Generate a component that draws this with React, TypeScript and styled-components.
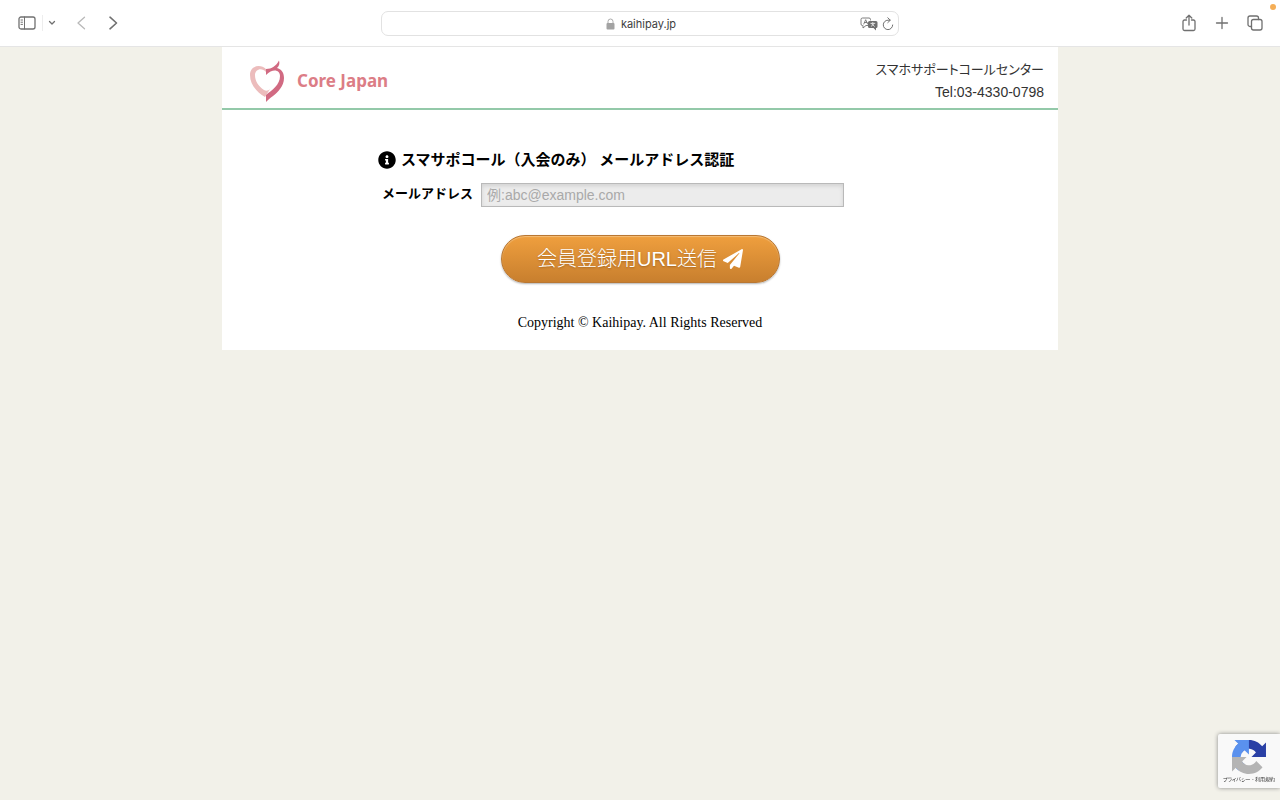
import React from "react";
import styled, { createGlobalStyle } from "styled-components";
import { FaInfoCircle, FaPaperPlane } from "react-icons/fa";

const sans = `"Liberation Sans", "Noto Sans CJK JP", sans-serif`;
const serif = `"Liberation Serif", "Noto Sans CJK JP", serif`;

const GlobalStyle = createGlobalStyle`
  *, *::before, *::after { box-sizing: border-box; }
  body {
    margin: 0;
    background: #f2f1e9;
    color: #000;
    font-family: ${serif};
  }
`;

const Toolbar = styled.header`
  display: grid;
  grid-template-columns: 1fr minmax(240px, 518px) 1fr;
  align-items: center;
  height: 47px;
  border-bottom: 1px solid #e5e5e5;
  background: #fff;
  color: #707070;
  font-family: Inter, sans-serif;
`;

const ToolGroup = styled.div<{ $end?: boolean }>`
  display: flex;
  align-items: center;
  justify-content: ${(p) => (p.$end ? "flex-end" : "flex-start")};
  gap: ${(p) => (p.$end ? "11px" : "0")};
  padding: ${(p) => (p.$end ? "0 14px 0 0" : "0 0 0 16px")};
`;

const ToolButton = styled.button<{ $width?: number; $color?: string }>`
  display: flex;
  align-items: center;
  justify-content: center;
  width: ${(p) => p.$width ?? 22}px;
  height: 24px;
  padding: 0;
  border: 0;
  background: none;
  color: ${(p) => p.$color ?? "inherit"};
`;

const Separator = styled.span`
  width: 1px;
  height: 16px;
  margin-left: 4px;
  background: #ededed;
`;

const HistoryButtons = styled.nav`
  display: flex;
  gap: 8px;
  margin-left: 8px;
`;

const AddressBar = styled.div`
  display: grid;
  grid-template-columns: 1fr auto 1fr;
  align-items: center;
  height: 25px;
  padding: 0 2px 0 4px;
  border: 1px solid #e2e2e2;
  border-radius: 7px;
`;

const Address = styled.div`
  grid-column: 2;
  display: flex;
  align-items: center;
  gap: 6px;
  color: #404040;
  font-size: 11px;
  line-height: 16px;
`;

const AddressActions = styled.div`
  display: flex;
  justify-content: flex-end;
`;

const RecordingDot = styled.span`
  position: absolute;
  top: 4px;
  right: 4px;
  width: 6px;
  height: 6px;
  border-radius: 50%;
  background: #f5ae56;
`;

const Sheet = styled.div`
  max-width: 836px;
  margin: 0 auto;
  background: #fff;
`;

const SiteHeader = styled.div`
  display: flex;
  justify-content: space-between;
  align-items: center;
  height: 63px;
  padding: 6px 14px 0 27px;
  border-bottom: 2px solid #93c9a9;
`;

const Brand = styled.a`
  display: flex;
  align-items: center;
  gap: 11px;
  color: #dc7d86;
  font: bold 17px/24px "Comic Sans MS", "Noto Sans", sans-serif;
  text-decoration: none;
`;

const Contact = styled.address`
  color: #333;
  font: normal 14px/22px ${sans};
  text-align: right;
`;

const CenterName = styled.div`
  font-size: 13px;
  font-feature-settings: "palt";
`;

const Main = styled.main`
  padding: 40px 156px 0;
`;

const Title = styled.h1`
  display: flex;
  align-items: center;
  gap: 5px;
  margin: 0;
  font-size: 15px;
  line-height: 20px;
  white-space: pre;
`;

const Field = styled.div`
  display: flex;
  gap: 8px;
  margin: 13px 58px 0 4px;
`;

const Label = styled.label`
  flex: none;
  font-size: 13px;
  font-weight: bold;
  line-height: 22px;
`;

const EmailInput = styled.input`
  flex: 1;
  min-width: 0;
  height: 24px;
  padding: 0 5px;
  border: 1px solid #b9b9b9;
  border-radius: 0;
  background: #ececec;
  box-shadow: inset 0 2px 4px #d2d2d2;
  font: 14px/20px ${sans};
  &::placeholder {
    color: #a9a9a9;
    opacity: 1;
  }
`;

const SubmitButton = styled.button`
  display: flex;
  align-items: center;
  justify-content: center;
  gap: 6px;
  width: 279px;
  height: 48px;
  margin: 28px auto 0;
  padding: 0;
  border: 1px solid #b97732;
  border-radius: 24px;
  background: linear-gradient(#ef9f3e, #c87f2e);
  box-shadow: inset 0 1px 1px #f3bd78, 0 1px 2px rgba(0, 0, 0, 0.3);
  color: #fff;
  font: 300 20px/28px ${sans};
  text-shadow: 0 1px 2px rgba(90, 50, 0, 0.4);
`;

const Footer = styled.footer`
  padding: 30px 0 17px;
  font-size: 14px;
  line-height: 20px;
  text-align: center;
`;

const Captcha = styled.aside`
  position: fixed;
  right: 0;
  bottom: 12px;
  display: flex;
  flex-direction: column;
  align-items: center;
  gap: 1px;
  width: 62px;
  height: 54px;
  padding-top: 6px;
  border-radius: 2px 0 0 2px;
  background: #f9f9f9;
  box-shadow: 0 0 4px #888;
`;

const CaptchaLinks = styled.div`
  color: #555;
  font: 5px/8px ${sans};
  font-feature-settings: "palt";
  white-space: nowrap;
  a {
    color: #333;
    text-decoration: none;
  }
`;

const Icon = ({ w, h, children }: { w: number; h: number; children: React.ReactNode }) => (
  <svg
    width={w}
    height={h}
    viewBox={`0 0 ${w} ${h}`}
    fill="none"
    stroke="currentColor"
    strokeWidth="1.3"
    strokeLinecap="round"
    strokeLinejoin="round"
    aria-hidden="true"
  >
    {children}
  </svg>
);

const HeartLogo = () => (
  <svg width="37" height="42" viewBox="0 0 37 42" aria-hidden="true">
    <path
      fill="#ecbcbc"
      d="M17 9C12 4 1 5 1 15C1 25 8 32 16 37L21 29C19 31 17 31 15 30C9 26 6 21 6 15C6 9 13 7 17 12Z"
    />
    <path
      fill="#d16a82"
      d="M17 9C23 9 27 6 30 .5C31 4 30 6 28 8C32 9 35 12 35 18C35 26 29 32 24 36C21 38 19 40 17 42V35C23 30 31 25 31 16C31 10 24 8 17 15Z"
    />
  </svg>
);

const RecaptchaLogo = () => (
  <svg width="34" height="34" viewBox="0 0 64 64" aria-hidden="true">
    <path
      fill="#2a40a5"
      d="M64 31.955l-.033-1.37V4.687l-7.16 7.16C50.948 4.674 42.033.093 32.05.093c-10.4 0-19.622 4.96-25.458 12.64l11.736 11.86a15.55 15.55 0 0 1 4.754-5.334c2.05-1.6 4.952-2.906 8.968-2.906.485 0 .86.057 1.135.163 4.976.393 9.288 3.14 11.828 7.124l-8.307 8.307L64 31.953"
    />
    <path
      fill="#5a91ee"
      d="M31.862.094l-1.37.033H4.594l7.16 7.16C4.58 13.147 0 22.06 0 32.046c0 10.4 4.96 19.622 12.64 25.458L24.5 45.768a15.55 15.55 0 0 1-5.334-4.754c-1.6-2.05-2.906-4.952-2.906-8.968 0-.485.057-.86.163-1.135.393-4.976 3.14-9.288 7.124-11.828l8.307 8.307L31.86.095"
    />
    <path
      fill="#b4b4b4"
      d="M.001 32.045l.033 1.37v25.898l7.16-7.16c5.86 7.173 14.774 11.754 24.76 11.754 10.4 0 19.622-4.96 25.458-12.64l-11.736-11.86a15.55 15.55 0 0 1-4.754 5.334c-2.05 1.6-4.952 2.906-8.968 2.906-.485 0-.86-.057-1.135-.163-4.976-.393-9.288-3.14-11.828-7.124l8.307-8.307c-10.522.04-22.4.066-27.295-.005"
    />
  </svg>
);

export default function App() {
  return (
    <>
      <GlobalStyle />
      <Toolbar>
        <ToolGroup>
          <ToolButton aria-label="Sidebar">
            <Icon w={18} h={14}>
              <rect x="1" y="1" width="16" height="12" rx="2" />
              <path d="M6.5 1V13M3 4H4.5M3 6.2H4.5M3 8.4H4.5" strokeWidth="1" />
            </Icon>
          </ToolButton>
          <Separator />
          <ToolButton $width={18} aria-label="Tab groups">
            <Icon w={8} h={6}>
              <path d="M1.5 1.5L4 4L6.5 1.5" />
            </Icon>
          </ToolButton>
          <HistoryButtons>
            <ToolButton $width={24} $color="#b9b9b9" aria-label="Back">
              <Icon w={10} h={14}>
                <path d="M8.5 1.2L2 7L8.5 12.8" />
              </Icon>
            </ToolButton>
            <ToolButton $width={24} aria-label="Forward">
              <Icon w={10} h={14}>
                <path d="M2 1.2L8.5 7L2 12.8" strokeWidth="1.6" />
              </Icon>
            </ToolButton>
          </HistoryButtons>
        </ToolGroup>
        <AddressBar>
          <Address>
            <svg width="9" height="12" viewBox="0 0 9 12" aria-hidden="true">
              <path d="M2 6V3.5a2.5 2.5 0 0 1 5 0V6" fill="none" stroke="#aaa" />
              <rect x=".5" y="5" width="8" height="6.5" rx="1" fill="#a3a3a3" />
            </svg>
            <span>kaihipay.jp</span>
          </Address>
          <AddressActions>
            <ToolButton aria-label="Translate">
              <Icon w={18} h={14}>
                <path
                  d="M8 8.5H6L3 11V8.5H2.5A1.5 1.5 0 0 1 1 7V2.5A1.5 1.5 0 0 1 2.5 1H9A1.5 1.5 0 0 1 10.5 2.5V3M3.8 7L5.7 2.7L7.6 7M4.5 5.5H7"
                  strokeWidth=".9"
                />
                <path
                  d="M9.5 4H16A1.5 1.5 0 0 1 17.5 5.5V9.5A1.5 1.5 0 0 1 16 11V13.5L13.5 11H9.5A1.5 1.5 0 0 1 8 9.5V5.5A1.5 1.5 0 0 1 9.5 4Z"
                  fill="currentColor"
                  stroke="none"
                />
                <path d="M10.8 6.4H14.8M12.8 5.4V6.4M11.2 9.3L14 6.8M11.6 6.8L14.4 9.3" stroke="#fff" strokeWidth=".7" />
              </Icon>
            </ToolButton>
            <ToolButton $width={16} aria-label="Reload">
              <Icon w={12} h={14}>
                <path d="M8 3.2H6A4.7 4.7 0 1 0 10.7 8M5.8 .8L8.3 3.2L5.8 5.6" strokeWidth="1" />
              </Icon>
            </ToolButton>
          </AddressActions>
        </AddressBar>
        <ToolGroup $end>
          <ToolButton aria-label="Share">
            <Icon w={14} h={18}>
              <path d="M4.5 6H2.5A1.5 1.5 0 0 0 1 7.5V15A1.5 1.5 0 0 0 2.5 16.5H11.5A1.5 1.5 0 0 0 13 15V7.5A1.5 1.5 0 0 0 11.5 6H9.5M7 11V1.2M4.2 4L7 1.2L9.8 4" />
            </Icon>
          </ToolButton>
          <ToolButton aria-label="New tab">
            <Icon w={14} h={14}>
              <path d="M7 1.5V12.5M1.5 7H12.5" />
            </Icon>
          </ToolButton>
          <ToolButton aria-label="Show all tabs">
            <Icon w={16} h={16}>
              <rect x="4.5" y="4.5" width="10.5" height="10.5" rx="2" />
              <path d="M4.5 11.5H3A2 2 0 0 1 1 9.5V3A2 2 0 0 1 3 1H9.5A2 2 0 0 1 11.5 3V4.5" />
            </Icon>
          </ToolButton>
        </ToolGroup>
        <RecordingDot />
      </Toolbar>
      <Sheet>
        <SiteHeader>
          <Brand href="#">
            <HeartLogo />
            Core Japan
          </Brand>
          <Contact>
            <CenterName>スマホサポートコールセンター</CenterName>
            <div>Tel:03-4330-0798</div>
          </Contact>
        </SiteHeader>
        <Main>
          <Title>
            <FaInfoCircle size={18} aria-hidden="true" />
            <span>スマサポコール（入会のみ） メールアドレス認証</span>
          </Title>
          <form onSubmit={(e) => e.preventDefault()}>
            <Field>
              <Label htmlFor="email">メールアドレス</Label>
              <EmailInput id="email" type="email" placeholder="例:abc@example.com" />
            </Field>
            <SubmitButton type="submit">
              <span>会員登録用URL送信</span>
              <FaPaperPlane size={20} aria-hidden="true" />
            </SubmitButton>
          </form>
        </Main>
        <Footer>Copyright © Kaihipay. All Rights Reserved</Footer>
      </Sheet>
      <Captcha>
        <RecaptchaLogo />
        <CaptchaLinks>
          <a href="#">プライバシー</a> - <a href="#">利用規約</a>
        </CaptchaLinks>
      </Captcha>
    </>
  );
}
